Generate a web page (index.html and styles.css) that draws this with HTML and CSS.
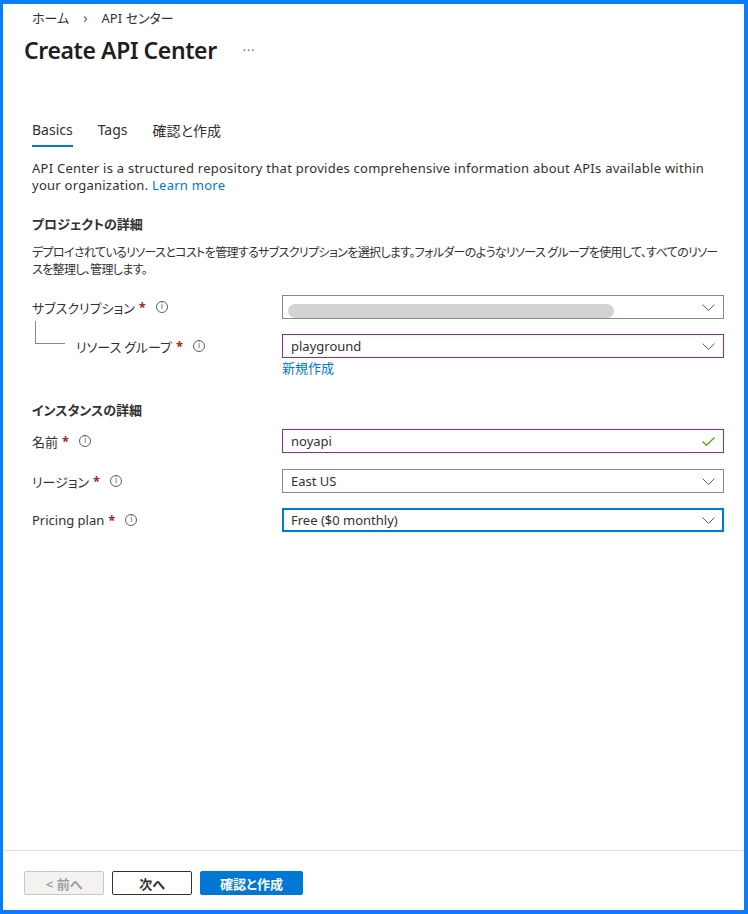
FILE: index.html
```html
<!DOCTYPE html>
<html lang="ja">
  <head>
    <meta charset="UTF-8" />
    <meta name="viewport" content="width=device-width, initial-scale=1.0" />
    <title>Create API Center</title>
    <link rel="stylesheet" href="styles.css">
  </head>
  <body>
    <div class="frame">
      <div class="main">
        <div class="breadcrumb">
          <span class="jp">ホーム</span>
          <span class="crumb-sep">&#8250;</span>
          <span>API <span class="jp">センター</span></span>
        </div>
        <div class="title-row">
          <h1>Create API Center</h1>
          <span class="more">&middot;&middot;&middot;</span>
        </div>

        <div class="tabs">
          <span class="tab active">Basics</span>
          <span class="tab">Tags</span>
          <span class="tab jp">確認と作成</span>
        </div>

        <p class="intro">
          API Center is a structured repository that provides comprehensive information about APIs available within<br />
          your organization. <a href="#">Learn more</a>
        </p>

        <h2 class="jp">プロジェクトの詳細</h2>
        <p class="jp desc">
          <span class="line">デプロイされているリソースとコストを管理するサブスクリプションを選択します。フォルダーのようなリソース グループを使用して、すべてのリソー</span><br />スを整理し、管理します。
        </p>

        <div class="field top">
          <div class="label">
            <span class="jp">サブスクリプション</span><span class="req">*</span><span class="info">i</span>
          </div>
          <div class="control">
            <div class="box">
              <span class="blur"></span>
              <svg class="chevron" width="13" height="7" viewBox="0 0 13 7"><path d="M0.5 0.5 L6.5 6.5 L12.5 0.5" fill="none" stroke="#605e5c" stroke-width="1"/></svg>
            </div>
          </div>
        </div>

        <div class="field sub">
          <div class="label child">
            <span class="tree"></span>
            <span class="jp">リソース グループ</span><span class="req">*</span><span class="info">i</span>
          </div>
          <div class="control">
            <div class="box dirty">
              <span class="value">playground</span>
              <svg class="chevron" width="13" height="7" viewBox="0 0 13 7"><path d="M0.5 0.5 L6.5 6.5 L12.5 0.5" fill="none" stroke="#605e5c" stroke-width="1"/></svg>
            </div>
            <a href="#" class="jp new-link">新規作成</a>
          </div>
        </div>

        <h2 class="jp section2">インスタンスの詳細</h2>

        <div class="field first">
          <div class="label">
            <span class="jp">名前</span><span class="req">*</span><span class="info">i</span>
          </div>
          <div class="control">
            <div class="box dirty">
              <span class="value">noyapi</span>
              <svg class="check" width="13" height="9" viewBox="0 0 13 9"><path d="M0.5 4.5 L4.5 8.3 L12.5 0.5" fill="none" stroke="#57a300" stroke-width="1.2"/></svg>
            </div>
          </div>
        </div>

        <div class="field">
          <div class="label">
            <span class="jp">リージョン</span><span class="req">*</span><span class="info">i</span>
          </div>
          <div class="control">
            <div class="box">
              <span class="value">East US</span>
              <svg class="chevron" width="13" height="7" viewBox="0 0 13 7"><path d="M0.5 0.5 L6.5 6.5 L12.5 0.5" fill="none" stroke="#605e5c" stroke-width="1"/></svg>
            </div>
          </div>
        </div>

        <div class="field sub">
          <div class="label">
            <span>Pricing plan</span><span class="req">*</span><span class="info">i</span>
          </div>
          <div class="control">
            <div class="box focused">
              <span class="value">Free ($0 monthly)</span>
              <svg class="chevron" width="13" height="7" viewBox="0 0 13 7"><path d="M0.5 0.5 L6.5 6.5 L12.5 0.5" fill="none" stroke="#605e5c" stroke-width="1"/></svg>
            </div>
          </div>
        </div>
      </div>

      <div class="footer">
        <button class="btn disabled"><span class="lt">&lt;</span> <span class="jp">前へ</span></button>
        <button class="btn secondary jp">次へ</button>
        <button class="btn primary jp">確認と作成</button>
      </div>
    </div>
  </body>
</html>
```

FILE: styles.css
```css
* {
  box-sizing: border-box;
}
body {
  margin: 0;
  font-family: "Noto Sans", "Noto Sans CJK JP", sans-serif;
  font-size: 13px;
  color: #323130;
  background: #fff;
}
.jp {
  font-family: "Noto Sans CJK JP", sans-serif;
  font-feature-settings: "palt";
}
.frame {
  width: 748px;
  height: 914px;
  border-style: solid;
  border-color: #0a7cff;
  border-width: 4px 4px 4px 3px;
  display: flex;
  flex-direction: column;
}
.main {
  flex: 1;
  padding: 0 20px 0 29px;
}
.breadcrumb {
  height: 26px;
  display: flex;
  align-items: center;
  gap: 14px;
  font-size: 13px;
  color: #323130;
}
.crumb-sep {
  color: #605e5c;
  font-size: 14px;
}
.title-row {
  display: flex;
  align-items: center;
  height: 40px;
  margin-left: -8px;
}
h1 {
  margin: 0;
  font-size: 23px;
  letter-spacing: -0.4px;
  font-weight: 600;
  color: #201f1e;
}
.more {
  margin-left: 26px;
  color: #605e5c;
  font-size: 12px;
  letter-spacing: 1px;
}
.tabs {
  margin-top: 50px;
  display: flex;
  gap: 25px;
  font-size: 14px;
}
.tab {
  padding-bottom: 5px;
  border-bottom: 2px solid transparent;
}
.tab.active {
  border-bottom-color: #0078d4;
}
.intro {
  margin: 13px 0 0;
  line-height: 17px;
  letter-spacing: 0.25px;
}
a {
  color: #0078d4;
  text-decoration: none;
}
h2 {
  margin: 20px 0 0;
  font-size: 13px;
  font-weight: 700;
}
.desc {
  margin: 10px 0 0;
  line-height: 17px;
  font-size: 12px;
  letter-spacing: -0.65px;
}
.desc .line {
  white-space: nowrap;
}
.field {
  display: flex;
  align-items: flex-start;
  margin-top: 16px;
}
.field.top {
  margin-top: 18px;
}
.field.sub {
  margin-top: 15px;
}
.field.first {
  margin-top: 10px;
}
.label {
  width: 250px;
  height: 24px;
  display: flex;
  align-items: center;
  position: relative;
}
.label.child {
  padding-left: 44px;
}
.tree {
  position: absolute;
  left: 3px;
  top: -13px;
  width: 30px;
  height: 23px;
  border-left: 1px solid #8a8886;
  border-bottom: 1px solid #8a8886;
}
.req {
  color: #a4262c;
  font-weight: 700;
  margin-left: 4px;
}
.info {
  width: 12px;
  height: 12px;
  border: 1px solid #605e5c;
  border-radius: 50%;
  margin-left: 10px;
  font-size: 8px;
  line-height: 10px;
  text-align: center;
  color: #605e5c;
  font-family: "DejaVu Sans", sans-serif;
}
.control {
  width: 442px;
}
.box {
  height: 24px;
  border: 1px solid #8a8886;
  display: flex;
  align-items: center;
  padding: 0 8px;
}
.box.dirty {
  border-color: #8a2da5;
}
.box.focused {
  border: 2px solid #0078d4;
  padding: 0 7px;
}
.value {
  flex: 1;
}
.blur {
  width: 326px;
  height: 14px;
  margin-left: -3px;
  margin-top: 8px;
  border-radius: 7px;
  background: #d2d3d5;
}
.chevron,
.check {
  margin-left: auto;
}
.new-link {
  display: block;
  margin-top: 1px;
  line-height: 17px;
}
.section2 {
  margin-top: 24px;
}
.footer {
  height: 60px;
  border-top: 1px solid #e1dfdd;
  display: flex;
  align-items: flex-start;
  gap: 8px;
  padding: 20px 0 0 21px;
}
.btn {
  height: 24px;
  width: 80px;
  font-size: 13px;
  font-weight: 700;
  border: 1px solid #323130;
  border-radius: 2px;
  background: #fff;
  color: #323130;
  padding: 0;
}
.btn.disabled {
  background: #f3f2f1;
  border-color: #c8c6c4;
  color: #a19f9d;
}
.btn.primary {
  width: 103px;
  background: #0078d4;
  border-color: #0078d4;
  color: #fff;
}
.lt {
  font-family: "Noto Sans", sans-serif;
}
```
